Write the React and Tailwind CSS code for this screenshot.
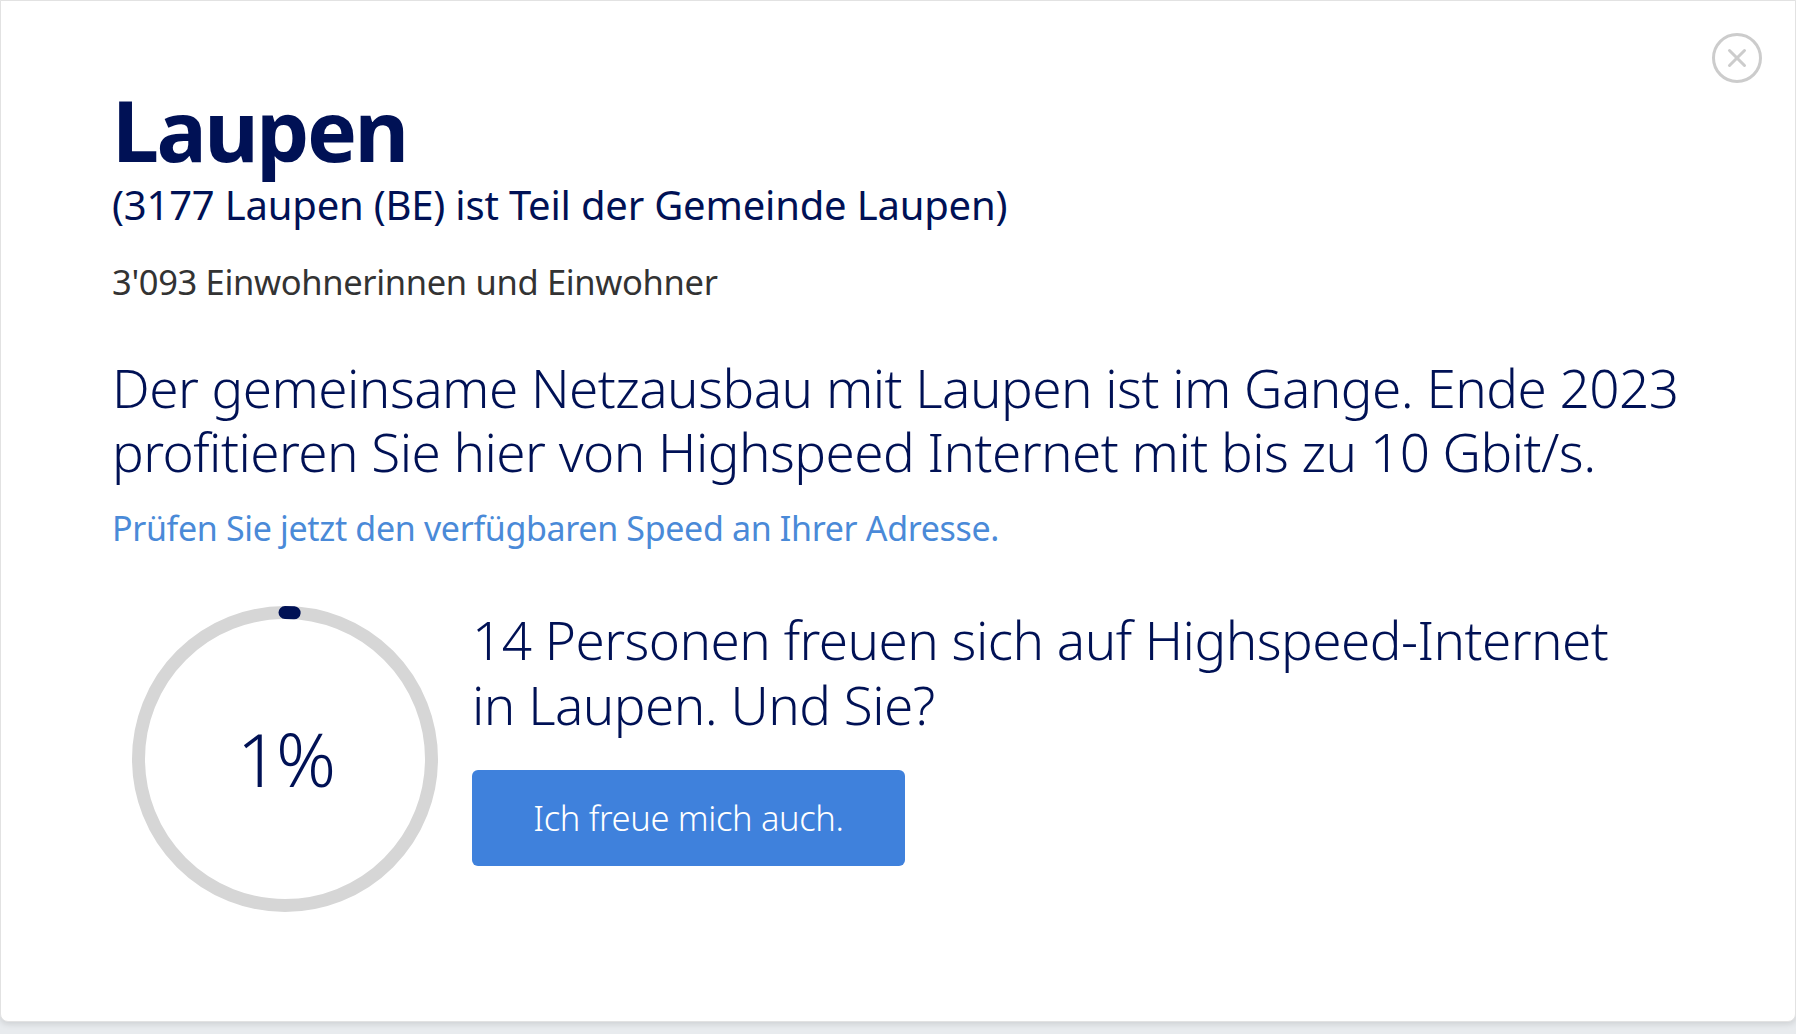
import { X } from 'lucide-react';

const Progress = ({ percent }) => {
  const r = 146.5;
  const c = 2 * Math.PI * r;
  return (
    <div className="relative w-[306px] h-[306px] shrink-0 ml-[20px]">
      <svg width="306" height="306" viewBox="0 0 306 306" className="absolute inset-0">
        <circle cx="153" cy="153" r={r} fill="none" stroke="#d6d6d6" strokeWidth="13" />
        <circle
          cx="153"
          cy="153"
          r={r}
          fill="none"
          stroke="#001155"
          strokeWidth="13"
          strokeLinecap="round"
          strokeDasharray={`${(c * percent) / 100} ${c}`}
          transform="rotate(-90 153 153)"
        />
      </svg>
      <div className="absolute inset-0 flex items-center justify-center text-[74px] leading-none font-light tracking-[-0.04em] text-[#001155]">
        {percent}%
      </div>
    </div>
  );
};

const App = () => {
  return (
    <div className="min-h-screen bg-[#e8ebee] font-['Noto_Sans',sans-serif]">
      <div className="relative h-[1022px] bg-white border border-[#e2e2e2] rounded-b-lg shadow-[0_2px_6px_rgba(0,0,0,0.12)] pl-[111px] pt-[86px]">
        <button className="absolute top-[32px] right-[33px] w-[50px] h-[50px] rounded-full border-[3px] border-[#cccccc] flex items-center justify-center text-[#cccccc]">
          <X size={30} strokeWidth={2.4} />
        </button>

        <h1 className="text-[84px] leading-[86px] font-bold tracking-[-0.03em] text-[#001155]">Laupen</h1>
        <p className="mt-[9px] text-[40px] leading-[46px] text-[#001155] tracking-[-0.005em]">
          (3177 Laupen (BE) ist Teil der Gemeinde Laupen)
        </p>
        <p className="mt-[34px] text-[34.5px] leading-[40px] text-[#333333] tracking-[-0.01em]">
          3'093 Einwohnerinnen und Einwohner
        </p>

        <p className="mt-[54px] text-[53px] leading-[64px] font-light text-[#001155] tracking-[-0.01em]">
          Der gemeinsame Netzausbau mit Laupen ist im Gange. Ende 2023
          <br />
          profitieren Sie hier von Highspeed Internet mit bis zu 10 Gbit/s.
        </p>
        <a href="#" className="block mt-[24px] text-[34px] leading-[40px] text-[#4a8ad8] tracking-[-0.01em]">
          Prüfen Sie jetzt den verfügbaren Speed an Ihrer Adresse.
        </a>

        <div className="flex gap-[34px] mt-[58px]">
          <Progress percent={1} />
          <div className="pt-[1px]">
            <p className="text-[53px] leading-[65px] font-light text-[#001155] tracking-[-0.01em]">
              14 Personen freuen sich auf Highspeed-Internet
              <br />
              in Laupen. Und Sie?
            </p>
            <button className="mt-[33px] w-[433px] h-[96px] rounded-md bg-[#3f81dc] text-white text-[34.5px] font-light tracking-[-0.01em]">
              Ich freue mich auch.
            </button>
          </div>
        </div>
      </div>
    </div>
  );
};

export default App;
